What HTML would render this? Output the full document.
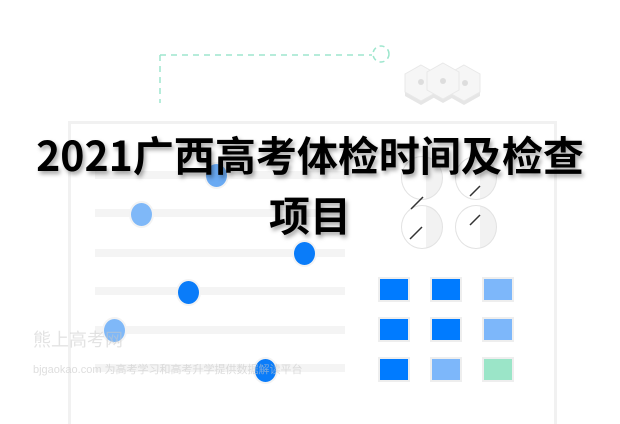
<!DOCTYPE html><html><head><meta charset="utf-8"><style>
body{margin:0;width:620px;height:406px;background:#fff;position:relative;overflow:hidden;font-family:"Liberation Sans","Noto Sans CJK SC",sans-serif}
.a{position:absolute}
.card{left:68px;top:121px;width:483px;height:300px;border:3px solid #f1f1f1;border-bottom:none}
.tr{left:95px;width:250px;height:8px;background:#f4f4f4}
.k{width:21px;height:23px;border-radius:50%;border:2px solid #f3f3f3;margin:-13px 0 0 -14px}
.sq{width:32px;height:25px;border:2px solid #eee;box-sizing:border-box}
.d{width:42px;height:44px;border-radius:50%;border:1px solid #e2e2e2;box-sizing:border-box;background:linear-gradient(90deg,#fff 60%,#f2f2f2 60%)}
.t{left:0;width:620px;text-align:center;font-weight:bold;font-size:41px;color:#000;text-shadow:2px 3px 4px rgba(0,0,0,.35);font-family:"Noto Sans CJK SC",sans-serif}
</style></head><body>
<svg class="a" style="left:0;top:0" width="620" height="406">
<path d="M160 55H372M160 55V103" stroke="#9de6cd" stroke-width="1.5" stroke-dasharray="6,5" fill="none"/>
<circle cx="381" cy="54" r="8" stroke="#9de6cd" stroke-width="1.5" stroke-dasharray="5,4" fill="none"/>
<g fill="#e6e6e6"><path d="M421 69l16 9v18l-16 9-16-9V78z"/><path d="M464 69l16 9v18l-16 9-16-9V78z"/><path d="M443 67l16 9v18l-16 9-16-9V76z"/></g>
<g fill="#f6f6f6" stroke="#e8e8e8"><path d="M421 65l16 9v18l-16 9-16-9V74z"/><path d="M464 65l16 9v18l-16 9-16-9V74z"/><path d="M443 63l16 9v18l-16 9-16-9V72z"/></g>
<g fill="#ddd"><circle cx="421" cy="82" r="3"/><circle cx="443" cy="81" r="3"/><circle cx="465" cy="83" r="3"/></g>
</svg>
<div class="a card"></div>
<div class="a tr" style="top:171px"></div><div class="a tr" style="top:209px"></div><div class="a tr" style="top:249px"></div><div class="a tr" style="top:287px"></div><div class="a tr" style="top:326px"></div><div class="a tr" style="top:364px"></div>
<div class="a k" style="left:218px;top:175px;background:#6aaaf3"></div>
<div class="a k" style="left:143px;top:214px;background:#7fb8f8"></div>
<div class="a k" style="left:306px;top:253px;background:#0a7cf9"></div>
<div class="a k" style="left:190px;top:292px;background:#0a7cf9"></div>
<div class="a k" style="left:116px;top:330px;background:#7fb8f8"></div>
<div class="a k" style="left:267px;top:370px;background:#0a7cf9"></div>
<div class="a d" style="left:401px;top:156px"></div><div class="a d" style="left:455px;top:156px"></div>
<div class="a d" style="left:401px;top:205px"></div><div class="a d" style="left:455px;top:205px"></div>
<svg class="a" style="left:0;top:0" width="620" height="406"><g stroke="#333" stroke-width="1.5"><path d="M411 209l12-12M470 196l10-10M410 239l12-12M470 225l10-10"/></g></svg>
<div class="a sq" style="left:378px;top:277px;background:#007bff"></div><div class="a sq" style="left:430px;top:277px;background:#007bff"></div><div class="a sq" style="left:482px;top:277px;background:#7db7fa"></div>
<div class="a sq" style="left:378px;top:317px;background:#007bff"></div><div class="a sq" style="left:430px;top:317px;background:#007bff"></div><div class="a sq" style="left:482px;top:317px;background:#7db7fa"></div>
<div class="a sq" style="left:378px;top:357px;background:#007bff"></div><div class="a sq" style="left:430px;top:357px;background:#7db7fa"></div><div class="a sq" style="left:482px;top:357px;background:#9be5c8"></div>
<div class="a" style="left:33px;top:326px;font-size:18px;color:rgba(200,200,200,.5)">熊上高考网</div>
<div class="a" style="left:33px;top:361px;font-size:11px;color:rgba(200,200,200,.6)">bjgaokao.com 为高考学习和高考升学提供数据解读平台</div>
<div class="a t" style="top:127px;line-height:52px">2021广西高考体检时间及检查</div>
<div class="a t" style="top:187px;line-height:52px">项目</div>
</body></html>
